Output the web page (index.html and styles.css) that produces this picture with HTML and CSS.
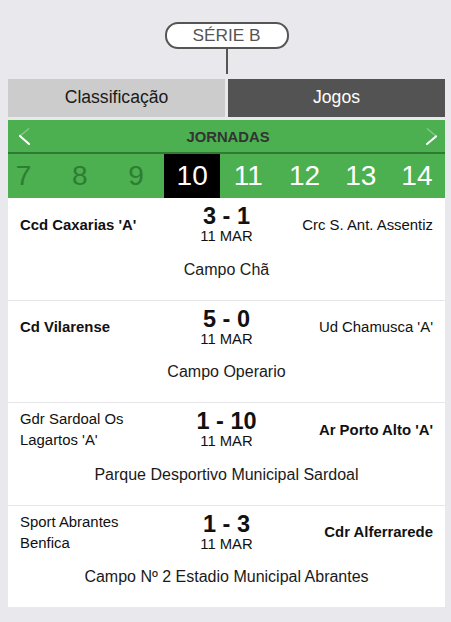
FILE: index.html
```html
<!DOCTYPE html>
<html lang="pt">
<head>
<meta charset="utf-8">
<title>Série B - Jogos</title>
<link rel="stylesheet" href="styles.css">
</head>
<body>
<div class="page">
  <div class="series">
    <span class="pill">SÉRIE B</span>
    <span class="stem"></span>
  </div>
  <div class="tabs">
    <div class="tab">Classificação</div>
    <div class="tab active">Jogos</div>
  </div>
  <div class="rounds">
    <div class="rounds-head">
      <svg class="chev chev-left" width="11" height="17" viewBox="0 0 11 17"><line x1="1" y1="8" x2="9.5" y2="1" class="faint"/><line x1="1" y1="8" x2="10" y2="16"/></svg>
      <span class="title">JORNADAS</span>
      <svg class="chev chev-right" width="11" height="17" viewBox="0 0 11 17"><line x1="10" y1="8" x2="1.5" y2="1" class="faint"/><line x1="10" y1="8.5" x2="1" y2="16"/></svg>
    </div>
    <div class="rounds-strip">
      <div class="round past">7</div>
      <div class="round past">8</div>
      <div class="round past">9</div>
      <div class="round current">10</div>
      <div class="round">11</div>
      <div class="round">12</div>
      <div class="round">13</div>
      <div class="round">14</div>
    </div>
  </div>
  <div class="matches">
    <div class="match">
      <div class="line">
        <div class="team win">Ccd Caxarias 'A'</div>
        <div class="mid"><div class="score">3 - 1</div><div class="date">11 MAR</div></div>
        <div class="team away">Crc S. Ant. Assentiz</div>
      </div>
      <div class="venue">Campo Chã</div>
    </div>
    <div class="match">
      <div class="line">
        <div class="team win">Cd Vilarense</div>
        <div class="mid"><div class="score">5 - 0</div><div class="date">11 MAR</div></div>
        <div class="team away">Ud Chamusca 'A'</div>
      </div>
      <div class="venue">Campo Operario</div>
    </div>
    <div class="match">
      <div class="line">
        <div class="team">Gdr Sardoal Os Lagartos 'A'</div>
        <div class="mid"><div class="score">1 - 10</div><div class="date">11 MAR</div></div>
        <div class="team away win">Ar Porto Alto 'A'</div>
      </div>
      <div class="venue">Parque Desportivo Municipal Sardoal</div>
    </div>
    <div class="match">
      <div class="line">
        <div class="team">Sport Abrantes Benfica</div>
        <div class="mid"><div class="score">1 - 3</div><div class="date">11 MAR</div></div>
        <div class="team away win">Cdr Alferrarede</div>
      </div>
      <div class="venue">Campo Nº 2 Estadio Municipal Abrantes</div>
    </div>
  </div>
</div>
</body>
</html>
```

FILE: styles.css
```css
html, body {
  margin: 0;
  padding: 0;
}
body {
  background: #e8e8ed;
  font-family: "Liberation Sans", Arial, sans-serif;
  color: #111;
}
.page {
  padding: 22px 6px 0 8px;
}
.series {
  display: flex;
  flex-direction: column;
  align-items: center;
}
.pill {
  box-sizing: border-box;
  width: 124px;
  height: 27px;
  border: 2px solid #555;
  border-radius: 13px;
  background: #fff;
  color: #555;
  font-size: 17.3px;
  display: flex;
  align-items: center;
  justify-content: center;
}
.stem {
  width: 2px;
  height: 25px;
  background: #555;
}
.tabs {
  display: grid;
  grid-template-columns: 1fr 1fr;
  gap: 3px;
  margin-top: 5px;
}
.tab {
  box-sizing: border-box;
  height: 38px;
  line-height: 36px;
  padding-bottom: 2px;
  text-align: center;
  font-size: 17.6px;
  background: #cccccc;
  color: #1a1a1a;
}
.tab.active {
  background: #535353;
  color: #fff;
}
.rounds {
  margin-top: 3px;
  background: #4caf50;
}
.rounds-head {
  display: grid;
  grid-template-columns: 1fr auto 1fr;
  align-items: center;
  box-sizing: border-box;
  height: 34px;
  padding: 1px 8px 0 11px;
  border-bottom: 2px solid #2f7b33;
}
.chev {
  display: block;
}
.chev line {
  stroke: #fff;
  stroke-width: 2;
  stroke-linecap: square;
}
.chev line.faint {
  stroke-opacity: 0.35;
  stroke-width: 1.3;
}
.chev-right {
  justify-self: end;
}
.title {
  font-weight: bold;
  font-size: 14.8px;
  color: #333;
}
.rounds-strip {
  display: flex;
  justify-content: flex-end;
  overflow: hidden;
  height: 44px;
}
.round {
  flex: 0 0 56.2px;
  display: flex;
  align-items: center;
  justify-content: center;
  font-size: 28px;
  color: #fff;
}
.round.past {
  color: #2e7d32;
}
.round.current {
  background: #000;
}
.matches {
  background: #fff;
}
.match {
  padding: 6px 12px 20px;
  border-bottom: 1px solid #e6e6ea;
}
.match:last-child {
  border-bottom: none;
}
.line {
  display: grid;
  grid-template-columns: 1fr 120px 1fr;
  height: 40px;
  align-items: center;
}
.team {
  font-size: 14.9px;
  line-height: 21px;
}
.team.away {
  text-align: right;
}
.team.win {
  font-weight: bold;
}
.mid {
  text-align: center;
  padding-bottom: 3px;
}
.score {
  font-size: 23.5px;
  font-weight: bold;
  line-height: 25px;
}
.date {
  font-size: 14.8px;
  line-height: 14px;
}
.venue {
  margin-top: 15.5px;
  text-align: center;
  font-size: 16px;
  line-height: 20px;
  color: #1a1a1a;
}
```
